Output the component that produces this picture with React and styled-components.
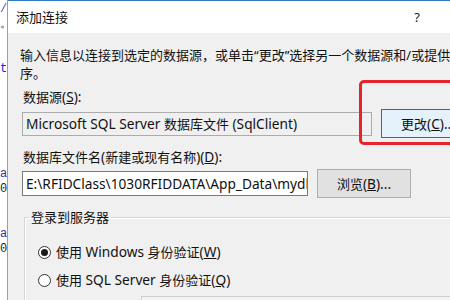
import React from 'react';
import styled, { createGlobalStyle } from 'styled-components';

const Global = createGlobalStyle`
  html, body { margin: 0; padding: 0; background: #fff; }
  body {
    width: 450px; height: 300px; overflow: hidden;
    font-family: "Noto Sans", "Noto Sans CJK SC", sans-serif;
    font-size: 13px; color: #111;
  }
`;

const Screen = styled.div`
  position: relative;
  display: flex;
  width: 450px;
  height: 300px;
  overflow: hidden;
  background: #fff;
`;

const CodeStrip = styled.div`
  flex: 0 0 7px;
  overflow: hidden;
  background: #fff;
  padding-top: 2px;
  font-family: "Liberation Mono", monospace;
  font-size: 12px;
  line-height: 15px;
`;

const CodeLine = styled.div`
  height: 15px;
  white-space: pre;
  color: ${p => p.$c || '#2b2bb8'};
`;

const Divider = styled.div`
  flex: 0 0 1px;
  background: #86a3c6;
`;

const Dialog = styled.div`
  flex: 0 0 540px;
  display: flex;
  flex-direction: column;
  border-top: 1px solid #2f7bc4;
  background: #f0f0f0;
`;

const TitleBar = styled.div`
  flex: 0 0 32px;
  display: flex;
  align-items: center;
  padding-left: 8px;
  background: #fff;
  line-height: 18px;
`;

const Title = styled.span`
  font-size: 13px;
  color: #111;
`;

const Help = styled.span`
  margin-left: auto;
  margin-right: 128px;
  font-family: "Noto Sans", sans-serif;
  font-size: 13px;
  color: #222;
`;

const Body = styled.div`
  flex: 1;
  display: flex;
  flex-direction: column;
  padding: 13px 0 0 12px;
  overflow: hidden;
`;

const L = styled.span`
  font-family: "Noto Sans", sans-serif;
  font-size: 13.7px;
`;

const Intro = styled.div`
  line-height: 18px;
  white-space: nowrap;
`;

const Label = styled.div`
  margin-top: ${p => p.$top || 6}px;
  padding-left: 3px;
  line-height: 18px;
  white-space: nowrap;
`;

const FieldRow = styled.div`
  display: flex;
  align-items: center;
  gap: 9px;
  height: 29px;
  margin-top: 3px;
  padding-left: 2px;
`;

const TextBox = styled.div`
  box-sizing: border-box;
  flex: 0 0 ${p => p.$w}px;
  height: ${p => p.$h || 24}px;
  display: flex;
  align-items: center;
  padding: 0 0 0 3px;
  overflow: hidden;
  white-space: nowrap;
  line-height: 18px;
  background: ${p => (p.$readOnly ? '#f0f0f0' : '#fff')};
  border: 1px solid ${p => (p.$readOnly ? '#acacac' : '#7a7a7a')};
`;

const BoxText = styled.span`
  white-space: pre;
`;

const Button = styled.div`
  box-sizing: border-box;
  flex: 0 0 94px;
  height: 29px;
  display: flex;
  align-items: center;
  justify-content: center;
  white-space: nowrap;
  line-height: 18px;
  background: ${p => (p.$primary ? '#e5f1fb' : '#e1e1e1')};
  border: 1px solid ${p => (p.$primary ? '#0078d7' : '#adadad')};
`;

const RedMark = styled.div`
  position: absolute;
  left: 359px;
  top: 80px;
  width: 110px;
  height: 59px;
  border: 3px solid #e5242b;
  border-radius: 5px;
  pointer-events: none;
`;

const Group = styled.fieldset`
  margin: 10px 0 0 4px;
  padding: 0;
  width: 500px;
  min-height: 120px;
  border: 1px solid #d6d6d6;
  box-shadow: inset 1px 1px 0 #fff;
`;

const Legend = styled.legend`
  margin-left: 4px;
  padding: 0 2px;
  line-height: 18px;
  font-size: 13px;
`;

const GroupContent = styled.div`
  display: flex;
  flex-direction: column;
  padding: 12px 0 0 13px;
`;

const RadioRow = styled.div`
  display: flex;
  align-items: center;
  gap: 5px;
  height: 28px;
  line-height: 18px;
  white-space: nowrap;
`;

const RadioDot = styled.span`
  box-sizing: border-box;
  flex: 0 0 13px;
  width: 13px;
  height: 13px;
  border-radius: 50%;
  border: 1px solid #333;
  background: #fff;
  display: flex;
  align-items: center;
  justify-content: center;
  &::after {
    content: '';
    width: 7px;
    height: 7px;
    border-radius: 50%;
    background: ${p => (p.$checked ? '#1b1b1b' : 'transparent')};
  }
`;

const InnerBox = styled.div`
  margin: 2px 0 0 103px;
  height: 40px;
  border: 1px solid #cfcfcf;
  background: #f4f4f4;
`;

const codeLines = [
  { t: '/', c: '#3a4fd0' },
  { t: '。', c: '#333' },
  { t: '' }, { t: '' },
  { t: 't', c: '#2424c8' },
  { t: '' }, { t: '' }, { t: '' }, { t: '' }, { t: '' }, { t: '' },
  { t: 'a', c: '#3030a0' },
  { t: '0', c: '#222' },
  { t: '' }, { t: '' },
  { t: 'a', c: '#3030a0' },
  { t: '0', c: '#222' },
  { t: '' }, { t: '' }, { t: '' },
];

export default function App() {
  return (
    <>
      <Global />
      <Screen>
        <CodeStrip>
          {codeLines.map((l, i) => (
            <CodeLine key={i} $c={l.c}>{l.t || ' '}</CodeLine>
          ))}
        </CodeStrip>
        <Divider />
        <Dialog>
          <TitleBar>
            <Title>添加连接</Title>
            <Help>?</Help>
          </TitleBar>
          <Body>
            <Intro>
              输入信息以连接到选定的数据源，或单击“更改”选择另一个数据源和/或提供程
              <br />
              序。
            </Intro>
            <Label>
              数据源<L>(<u>S</u>):</L>
            </Label>
            <FieldRow>
              <TextBox $w={350} $readOnly>
                <BoxText>
                  <L>Microsoft SQL Server </L>数据库文件<L> (SqlClient)</L>
                </BoxText>
              </TextBox>
              <Button $primary>
                更改<L>(<u>C</u>)...</L>
              </Button>
            </FieldRow>
            <Label $top={10}>
              数据库文件名<L>(</L>新建或现有名称<L>)(<u>D</u>):</L>
            </Label>
            <FieldRow>
              <TextBox $w={286} $h={25}>
                <BoxText>
                  <L>E:\RFIDClass\1030RFIDDATA\App_Data\mydb.mdf</L>
                </BoxText>
              </TextBox>
              <Button>
                浏览<L>(<u>B</u>)...</L>
              </Button>
            </FieldRow>
            <Group>
              <Legend>登录到服务器</Legend>
              <GroupContent>
                <RadioRow>
                  <RadioDot $checked />
                  <span>
                    使用<L> Windows </L>身份验证<L>(<u>W</u>)</L>
                  </span>
                </RadioRow>
                <RadioRow>
                  <RadioDot />
                  <span>
                    使用<L> SQL Server </L>身份验证<L>(<u>Q</u>)</L>
                  </span>
                </RadioRow>
                <InnerBox />
              </GroupContent>
            </Group>
          </Body>
        </Dialog>
        <RedMark />
      </Screen>
    </>
  );
}
